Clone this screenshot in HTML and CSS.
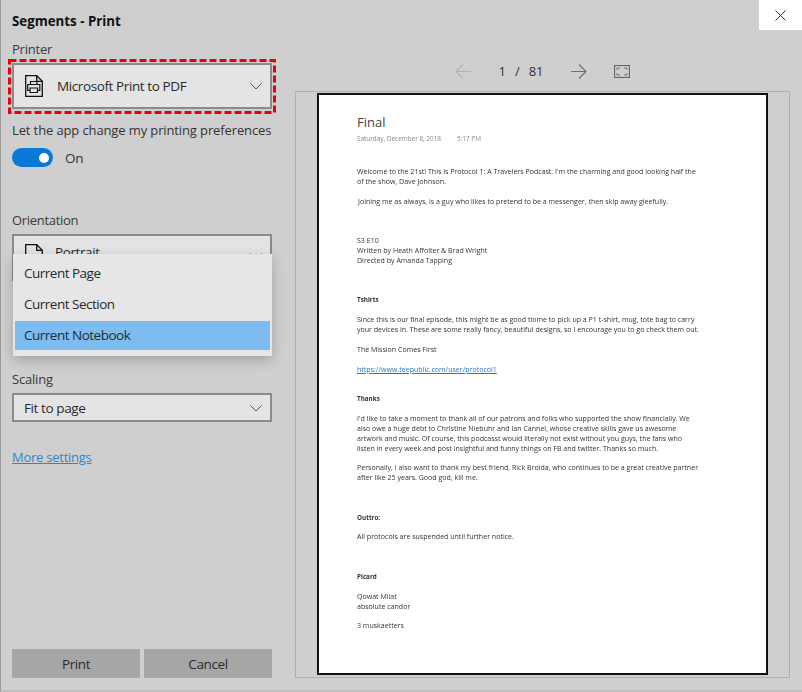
FILE: index.html
```html
<!DOCTYPE html>
<html lang="en">
<head>
<meta charset="utf-8">
<title>Segments - Print</title>
<link rel="stylesheet" href="styles.css">
</head>
<body>
<div class="dialog">
  <aside class="side">
    <h1 class="title">Segments - Print</h1>
    <div class="label label-printer">Printer</div>
    <div class="select select-printer">
      <svg class="file-icon" width="18" height="22" viewBox="0 0 18 22" fill="none" stroke="#111" stroke-width="1.300">
        <path d="M.7.700h11l5.600 5.600v15h-16.600z"/>
        <path d="M11.700.700v5.600h5.600"/>
        <path d="M5.500 9.500V6.500h6.500v3M5 15.500H2.700V9.500h12.100v6H12.500M5 13h7.500v4.500H5z" stroke-width="1.200"/>
      </svg>
      <span class="select-text">Microsoft Print to PDF</span>
      <svg class="chev" width="12" height="7" viewBox="0 0 12 7" fill="none" stroke="#555" stroke-width="1"><path d="M.5.500 6 6 11.500.500"/></svg>
      <svg class="annot" width="268" height="55" viewBox="0 0 268 55" fill="none" stroke="#e8000f" stroke-width="3" stroke-dasharray="7 3"><rect x="1.500" y="1.500" width="265" height="52"/></svg>
    </div>
    <div class="pref">Let the app change my printing preferences</div>
    <div class="toggle-row">
      <span class="toggle"><span class="knob"></span></span>
      <span class="toggle-text">On</span>
    </div>
    <div class="label label-orient">Orientation</div>
    <div class="orient-wrap">
      <div class="select select-orient">
        <svg class="page-icon" width="18" height="22" viewBox="0 0 18 22" fill="none" stroke="#111" stroke-width="1.300"><path d="M.7.700h11l5.600 5.600v15h-16.600z"/><path d="M11.700.700v5.600h5.600"/></svg>
        <span class="select-text orient-text">Portrait</span>
        <svg class="chev chev-orient" width="12" height="7" viewBox="0 0 12 7" fill="none" stroke="#555" stroke-width="1"><path d="M.5.500 6 6 11.500.500"/></svg>
      </div>
      <ul class="menu">
        <li class="menu-item">Current Page</li>
        <li class="menu-item">Current Section</li>
        <li class="menu-item active">Current Notebook</li>
      </ul>
    </div>
    <div class="label label-scaling">Scaling</div>
    <div class="select select-fit">
      <span class="fit-text">Fit to page</span>
      <svg class="chev" width="12" height="7" viewBox="0 0 12 7" fill="none" stroke="#555" stroke-width="1"><path d="M.5.500 6 6 11.500.500"/></svg>
    </div>
    <a class="more" href="#">More settings</a>
    <div class="actions">
      <button class="btn">Print</button>
      <button class="btn">Cancel</button>
    </div>
  </aside>
  <main class="preview">
    <div class="topbar"><button class="close" aria-label="Close"><svg width="11" height="11" viewBox="0 0 11 11" stroke="#333" stroke-width="1"><path d="M.5.500l10 10M10.500.500l-10 10"/></svg></button></div>
    <div class="pager">
      <svg class="arrow" width="17" height="15" viewBox="0 0 17 15" fill="none" stroke="#b4b4b4" stroke-width="1.100"><path d="M16 7.500H1M8 .5l-7 7 7 7"/></svg>
      <span class="count"><span>1</span><span>/</span><span>81</span></span>
      <svg class="arrow" width="17" height="15" viewBox="0 0 17 15" fill="none" stroke="#6f6f6f" stroke-width="1.100"><path d="M1 7.500h15M9 .5l7 7-7 7"/></svg>
      <svg class="fit" width="16" height="13" viewBox="0 0 16 13" fill="none" stroke="#666"><rect x=".5" y=".5" width="15" height="12" stroke-width="1.200"/><path d="M3 5V3h3M10 3h3v2M13 8v2h-3M6 10H3V8" stroke-width=".9"/></svg>
    </div>
    <div class="frame">
      <article class="page">
        <div class="doc-title">Final</div>
        <div class="doc-date"><span>Saturday, December 8, 2018</span><span>5:17 PM</span></div>
        <p class="para first">Welcome to the 21st! This is Protocol 1: A Travelers Podcast. I'm the charming and good looking half the<br>of the show, Dave Johnson.</p>
        <p class="para gap1 indent">Joining me as always, is a guy who likes to pretend to be a messenger, then skip away gleefully.</p>
        <p class="para gap3">S3 E10<br>Written by Heath Affolter &amp; Brad Wright<br>Directed by Amanda Tapping</p>
        <p class="para gap3 bold">Tshirts</p>
        <p class="para gap1">Since this is our final episode, this might be as good tiome to pick up a P1 t-shirt, mug, tote bag to carry<br>your devices in. These are some really fancy, beautiful designs, so I encourage you to go check them out.</p>
        <p class="para gap1">The Mission Comes First</p>
        <p class="para gap1"><a class="doc-link" href="#">https://www.teepublic.com/user/protocol1</a></p>
        <p class="para gap2 bold">Thanks</p>
        <p class="para gap1">I'd like to take a moment to thank all of our patrons and folks who supported the show financially. We<br>also owe a huge debt to Christine Niebuhr and Ian Cannel, whose creative skills gave us awesome<br>artwork and music. Of course, this podcasst would literally not exist without you guys, the fans who<br>listen in every week and post insightful and funny things on FB and twitter. Thanks so much.</p>
        <p class="para gap1">Personally, I also want to thank my best friend, Rick Broida, who continues to be a great creative partner<br>after like 25 years. Good god, kill me.</p>
        <p class="para gap3 bold">Outtro:</p>
        <p class="para gap1">All protocols are suspended until further notice.</p>
        <p class="para gap3 bold">Picard</p>
        <p class="para gap1">Qowat Milat<br>absolute candor</p>
        <p class="para gap1">3 muskaetters</p>
      </article>
    </div>
  </main>
</div>
</body>
</html>
```
FILE: styles.css
```css
* { box-sizing: border-box; }
html, body { margin: 0; height: 100%; }
body { background: #cfcfcf; font-family: "Open Sans", "Noto Sans", sans-serif; color: #2a2a2a; overflow: hidden; }
.dialog { width: 802px; height: 692px; display: flex; background: #cfcfcf; border-left: 1px solid #9a9a9a; border-bottom: 2px solid #bdbdbd; }
.side { width: 294px; flex: none; padding: 13px 0 0 11px; display: flex; flex-direction: column; height: 100%; }
.title { margin: 0; font-size: 13.300px; line-height: 16px; font-weight: 700; color: #111; }
.label { font-size: 13px; line-height: 18px; letter-spacing: -.2px; color: #3a3a3a; }
.label-printer { margin-top: 11px; }
.select { width: 260px; background: #e4e4e4; border: 2px solid #8b8b8b; display: flex; align-items: center; position: relative; }
.select-printer { height: 46px; margin-top: 5px; padding: 0 0 0 11px; }
.select-text { font-size: 13.500px; letter-spacing: -.4px; color: #2a2a2a; margin-left: 14px; }
.select .chev { position: absolute; right: 8px; top: 50%; margin-top: -3px; }
.select .chev-orient { top: 17px; margin-top: 0; }
.file-icon, .page-icon { flex: none; }
.annot { position: absolute; left: -6px; top: -6px; }
.pref { margin-top: 12px; font-size: 13px; line-height: 18px; letter-spacing: -.12px; color: #333; white-space: nowrap; }
.toggle-row { display: flex; align-items: center; margin-top: 9px; }
.toggle { width: 41px; height: 19px; border-radius: 10px; background: #0a78d7; display: flex; align-items: center; justify-content: flex-end; padding-right: 4px; }
.knob { width: 10px; height: 10px; border-radius: 50%; background: #fff; }
.toggle-text { margin-left: 12px; font-size: 13.500px; letter-spacing: -.2px; color: #333; }
.label-orient { margin-top: 44px; letter-spacing: -.3px; }
.orient-wrap { position: relative; margin-top: 5px; height: 122px; }
.select-orient { height: 47px; padding: 0 0 0 11px; align-items: flex-start; overflow: hidden; }
.page-icon { margin-top: 8px; }
.orient-text { margin-top: 7px; margin-left: 12px; }
.menu { position: absolute; left: 1px; top: 20px; width: 259px; height: 102px; margin: 0; padding: 4px 2px 5px; list-style: none; background: #e6e6e6; box-shadow: 0 4px 12px rgba(0,0,0,.22); }
.menu-item { height: 31px; padding: 1px 0 0 9px; font-size: 13.500px; line-height: 29px; letter-spacing: -.5px; color: #2a2a2a; }
.menu-item.active { height: 29px; margin-top: 1px; padding-top: 0; background: #7cbcf0; }
.label-scaling { margin-top: 14px; }
.select-fit { height: 29px; margin-top: 5px; padding-left: 10px; }
.fit-text { font-size: 13.500px; letter-spacing: -.4px; color: #2a2a2a; }
.more { margin-top: 26px; width: max-content; font-size: 13px; line-height: 18px; letter-spacing: -.25px; color: #2f86cf; text-decoration: underline; }
.actions { margin-top: auto; margin-bottom: 12px; display: flex; gap: 4px; width: 260px; }
.btn { flex: 1; height: 29px; border: 0; padding: 0; background: #a6a6a6; font: inherit; font-size: 13.500px; letter-spacing: -.4px; color: #2a2a2a; }
.preview { flex: 1; min-width: 0; display: flex; flex-direction: column; }
.topbar { height: 30px; display: flex; justify-content: flex-end; flex: none; }
.close { width: 43px; height: 30px; border: 0; padding: 0; background: #fff; display: flex; align-items: center; justify-content: center; }
.pager { height: 61px; flex: none; display: flex; align-items: center; padding: 21px 0 0 160px; }
.count { width: 98px; display: flex; justify-content: center; gap: 9px; font-size: 13px; color: #333; }
.fit { margin-left: 27px; }
.frame { width: 495px; height: 587px; flex: none; border: 1px solid #b0b0b0; background: #cfcfcf; padding: 1px 0 0 21px; }
.page { width: 451px; height: 582px; border: 2px solid #111; background: #fff; padding: 17px 0 0 38px; font-family: "Open Sans", sans-serif; color: #333; }
.doc-title { font-size: 13px; line-height: 20px; color: #444; }
.doc-date { font-size: 6.400px; line-height: 8px; color: #888; margin-top: 3px; display: flex; gap: 16px; filter: blur(.3px); }
.para { margin: 0; font-size: 7.050px; line-height: 9.900px; white-space: nowrap; filter: blur(.3px); }
.first { margin-top: 24px; }
.gap1 { margin-top: 9.900px; }
.gap2 { margin-top: 19.500px; }
.gap3 { margin-top: 29.500px; }
.indent { padding-left: 1px; }
.bold { font-weight: 700; font-size: 6.300px; }
.doc-link { color: #2478c8; text-decoration: underline; }
```
